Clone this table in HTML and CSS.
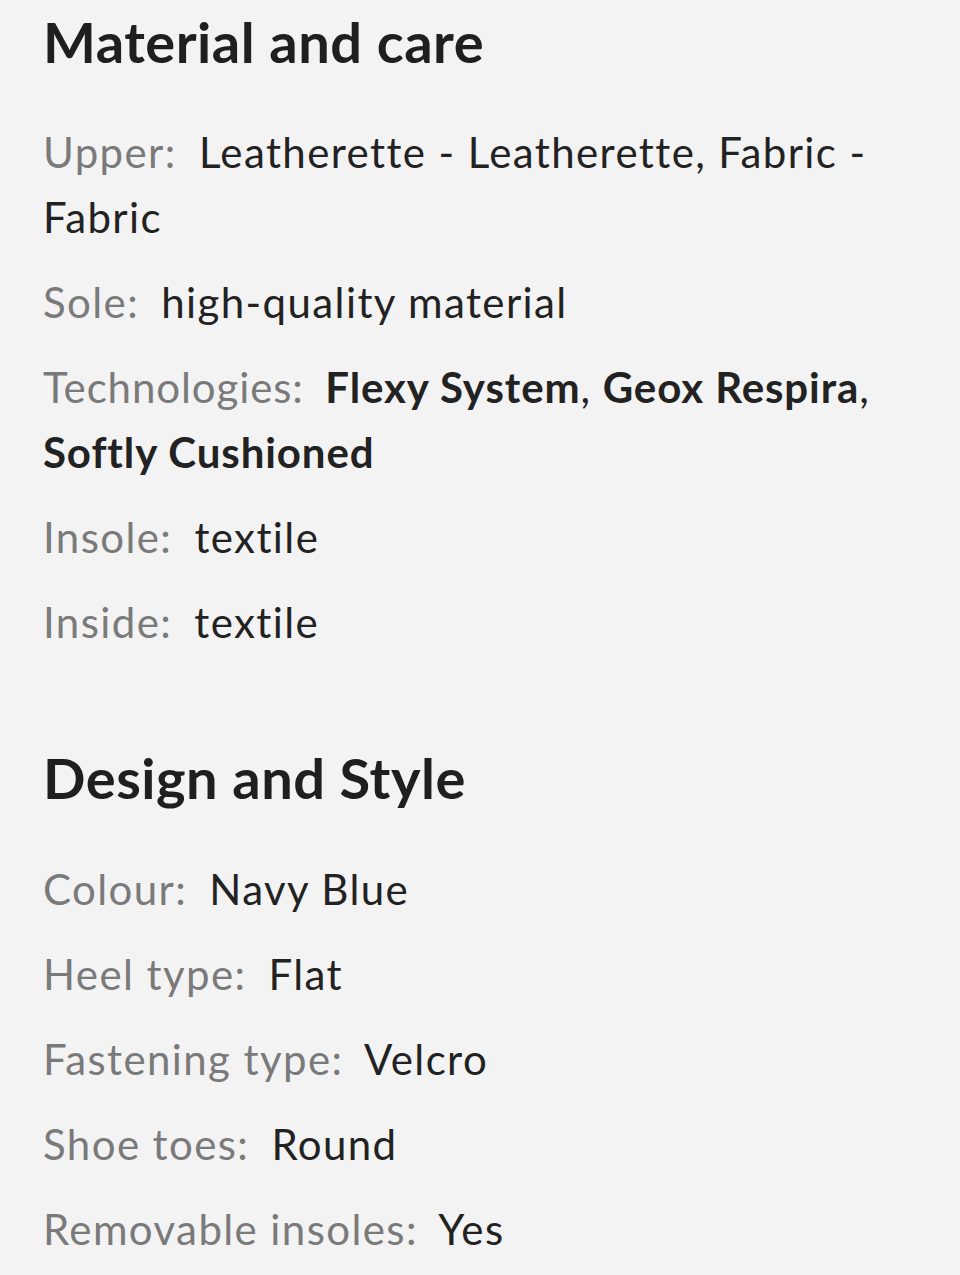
FILE: index.html
```html
<!DOCTYPE html>
<html lang="en">
<head>
<meta charset="utf-8">
<title>Material and care</title>
<link rel="stylesheet" href="styles.css">
</head>
<body>
<main class="page">
  <section class="section">
    <h2 class="heading">Material and care</h2>
    <p class="row"><span class="label">Upper:</span> <span class="value">Leatherette - Leatherette, Fabric - Fabric</span></p>
    <p class="row"><span class="label">Sole:</span> <span class="value">high-quality material</span></p>
    <p class="row condensed"><span class="label">Technologies:</span> <span class="value"><b>Flexy System</b>, <b>Geox Respira</b>, <b>Softly Cushioned</b></span></p>
    <p class="row"><span class="label">Insole:</span> <span class="value">textile</span></p>
    <p class="row"><span class="label">Inside:</span> <span class="value">textile</span></p>
  </section>
  <section class="section">
    <h2 class="heading">Design and Style</h2>
    <p class="row"><span class="label">Colour:</span> <span class="value">Navy Blue</span></p>
    <p class="row"><span class="label">Heel type:</span> <span class="value">Flat</span></p>
    <p class="row"><span class="label">Fastening type:</span> <span class="value">Velcro</span></p>
    <p class="row"><span class="label">Shoe toes:</span> <span class="value">Round</span></p>
    <p class="row"><span class="label">Removable insoles:</span> <span class="value">Yes</span></p>
  </section>
</main>
</body>
</html>
```
FILE: styles.css
```css
html, body {
  margin: 0;
  padding: 0;
  background: #f3f3f3;
}
.page {
  padding: 10px 40px 0 43px;
  font-family: Lato, "Open Sans", sans-serif;
  color: #222;
  font-variant-ligatures: none;
}
.section + .section {
  margin-top: 91px;
}
.heading {
  margin: 0 0 46px;
  font-size: 56px;
  line-height: 64px;
  font-weight: 700;
  color: #1f1f1f;
  letter-spacing: 0.5px;
}
.section + .section .heading {
  margin-bottom: 47px;
}
.row {
  margin: 0 0 20px;
  font-size: 42px;
  line-height: 65px;
  font-weight: 400;
  letter-spacing: 1.4px;
}
.label {
  color: #7a7a7a;
  margin-right: 10px;
}
.value {
  color: #222;
}
.value b {
  font-weight: 700;
}
.condensed {
  letter-spacing: 0.9px;
}
```
